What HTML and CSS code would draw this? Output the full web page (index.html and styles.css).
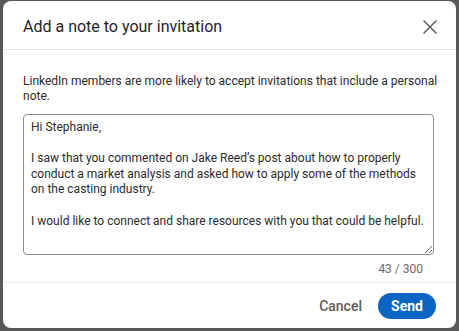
FILE: index.html
```html
<html>
    <head>
        <link rel="stylesheet" href="styles.css">
    </head>
    <body>
        <div class="modal">
            <div class="modal-header">
                <h2>Add a note to your invitation</h2>
                <button class="closeBtn" aria-label="Dismiss">
                    <svg width="14" height="14" viewBox="0 0 14 14">
                        <path d="M0.5 0.5 L13.5 13.5 M13.5 0.5 L0.5 13.5" stroke="#5e5e5e" stroke-width="1.5" fill="none"/>
                    </svg>
                </button>
            </div>
            <div class="modal-body">
                <p class="hint">LinkedIn members are more likely to accept invitations that include a personal note.</p>
                <textarea class="note">Hi Stephanie,

I saw that you commented on Jake Reed’s post about how to properly conduct a market analysis and asked how to apply some of the methods on the casting industry.

I would like to connect and share resources with you that could be helpful.</textarea>
                <div class="counter">43 / 300</div>
            </div>
            <div class="modal-footer">
                <button class="cancelBtn">Cancel</button>
                <button class="sendBtn">Send</button>
            </div>
        </div>
    </body>
</html>
```

FILE: styles.css
```css
*{
    font-family: Roboto, "Liberation Sans", Arial, sans-serif;
    box-sizing: border-box;
}
body{
    margin: 0px;
    background: #585858;
    padding: 1px 3px 3px 3px;
}
.modal{
    background: white;
    border-radius: 8px;
    height: 327px;
    display: flex;
    flex-direction: column;
}
.modal-header{
    display: flex;
    justify-content: space-between;
    align-items: center;
    height: 49px;
    padding: 0px 19px 0px 20px;
    border-bottom: 1px solid #e8e8e8;
}
.modal-header h2{
    margin: 0px;
    font-size: 16px;
    font-weight: normal;
    color: #1f1f1f;
    padding-top: 3px;
}
.closeBtn{
    background: none;
    border: none;
    padding: 0px;
    width: 14px;
    height: 14px;
    margin-top: 3px;
    display: flex;
}
.modal-body{
    padding: 24px 22px 0px 20px;
    border-bottom: 1px solid #ececec;
}
.hint{
    margin: 0px -10px 10px 0px;
    font-size: 12px;
    line-height: 15px;
    color: #2b2b2b;
}
.note{
    display: block;
    width: 100%;
    height: 141px;
    border: 1px solid #8c8c8c;
    border-radius: 4px;
    padding: 5px 7px;
    font-size: 12px;
    line-height: 15.6px;
    color: #2b2b2b;
    resize: vertical;
}
.counter{
    text-align: right;
    font-size: 12px;
    line-height: 15px;
    color: #6b6b6b;
    padding: 7px 11px 5px 0px;
}
.modal-footer{
    flex: 1;
    display: flex;
    justify-content: flex-end;
    align-items: center;
    padding: 1px 20px 0px 0px;
    gap: 16px;
}
.cancelBtn{
    background: none;
    border: none;
    font-size: 14px;
    font-weight: 500;
    color: #5e5e5e;
    padding: 0px;
}
.sendBtn{
    background: #0a66c2;
    color: white;
    border: none;
    border-radius: 13px;
    font-size: 14px;
    font-weight: bold;
    height: 26px;
    width: 58px;
}
```
